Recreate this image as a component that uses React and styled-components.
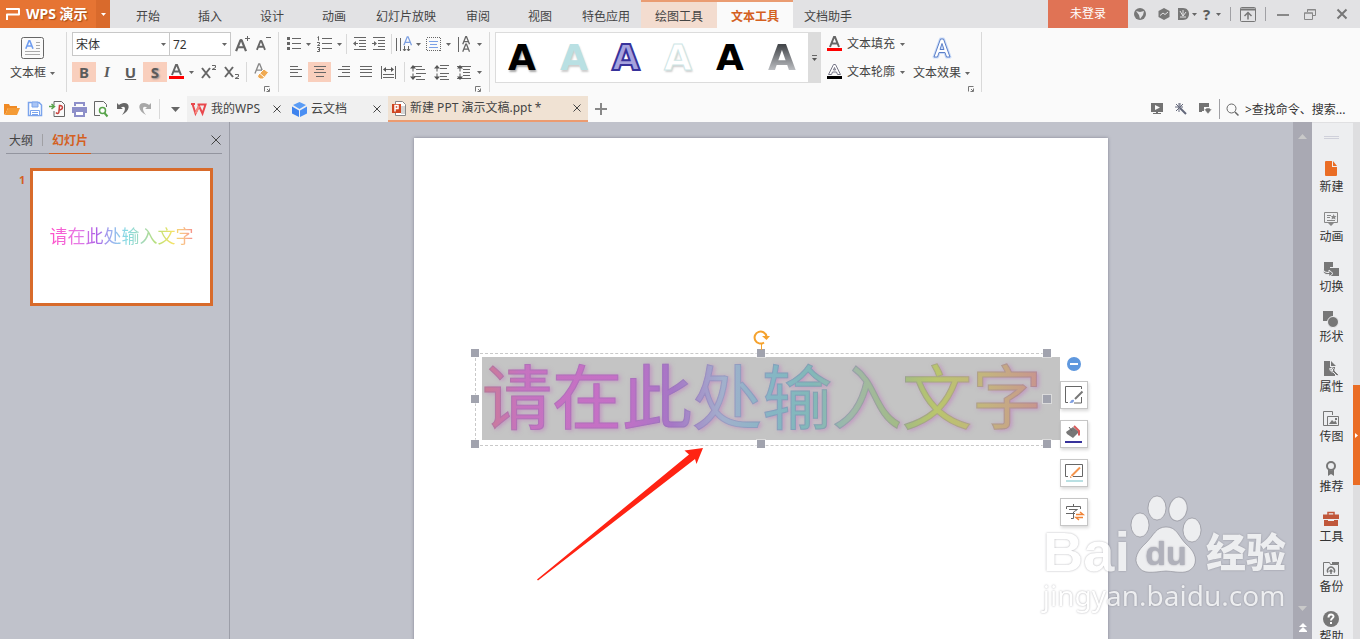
import React from 'react';
import styled, { createGlobalStyle, css } from 'styled-components';

const GlobalStyle = createGlobalStyle`
  * {
    box-sizing: border-box;
  }

  body {
    margin: 0;
    overflow: hidden;
    font-family: 'Noto Sans', 'Noto Sans CJK SC', sans-serif;
    font-size: 12px;
    color: #444;
  }

  button,
  input,
  select {
    font: inherit;
    color: inherit;
    border: none;
    border-radius: 0;
    padding: 0;
    margin: 0;
    background: none;
    outline: none;
  }
`;

const AppContainer = styled.div`
  display: flex;
  flex-direction: column;
  height: 100vh;
  background: #fafafa;
`;

const Drawing = styled.svg`
  display: block;
  flex: none;
  overflow: visible;
`;

/* ---------- title bar ---------- */

const TitleBar = styled.header`
  display: flex;
  flex: none;
  height: 28px;
  background: #e2e2e4;
`;

const Brand = styled.button`
  display: flex;
  align-items: center;
  gap: 6px;
  width: 96px;
  padding-left: 6px;
  background: #e67433;
  color: #fff;
  font-size: 14px;
  font-weight: 700;
  line-height: 28px;
  white-space: nowrap;
  text-shadow: 1px 1px 1px rgba(120, 50, 0, 0.6);
`;

const BrandMenu = styled.button`
  display: flex;
  align-items: center;
  justify-content: center;
  width: 14px;
  margin-right: 7px;
  background: #d96a2c;
`;

const MenuTabs = styled.nav`
  display: flex;
  flex: 1;
`;

const MenuTab = styled.button`
  min-width: 62px;
  padding: 6px 11px 0;
  line-height: 20px;
  white-space: nowrap;

  ${({ $tool }) =>
    $tool &&
    css`
      padding: 4px 14px 0;
      border-top: 2px solid #ea9c72;
      background: #f3dccf;
    `}

  ${({ $active }) =>
    $active &&
    css`
      background: #fafafa;
      color: #d4601f;
      font-weight: 700;
    `}
`;

const LoginButton = styled.button`
  width: 80px;
  background: #e07355;
  color: #fff;
  line-height: 28px;
`;

const WindowTools = styled.div`
  display: flex;
  align-items: center;
  height: 28px;
  padding-right: 4px;
`;

const Tool = styled.button`
  display: flex;
  align-items: center;
  justify-content: center;
  flex: none;
  width: ${({ $w }) => $w || 20}px;
  height: 20px;
  background: ${({ $on }) => ($on ? '#f9cfbd' : 'transparent')};
`;

const Divider = styled.span`
  flex: none;
  width: 1px;
  height: ${({ $h }) => $h || 20}px;
  margin: 0 ${({ $m }) => ($m === undefined ? 2 : $m)}px;
  background: ${({ $dark }) => ($dark ? '#a0a0a4' : '#d9d9d9')};
`;

/* ---------- ribbon ---------- */

const Ribbon = styled.section`
  display: flex;
  flex: none;
  height: 68px;
  padding-top: 4px;
`;

const RibbonGroup = styled.div`
  display: flex;
  flex-direction: column;
  flex: none;
  height: 60px;
  padding-left: 5px;
  width: ${({ $w }) => $w}px;
  border-right: 1px solid #d9d9d9;
`;

const ToolRow = styled.div`
  display: flex;
  align-items: center;
  height: ${({ $tall }) => ($tall ? 24 : 20)}px;
  margin-bottom: ${({ $tall }) => ($tall ? 6 : 0)}px;
`;

const Launcher = styled.button`
  align-self: flex-end;
  margin: 4px 8px 0 0;
`;

const BigButton = styled.button`
  display: flex;
  flex-direction: column;
  align-items: center;
  align-self: flex-start;
  gap: 3px;
  height: 52px;
  padding: 5px 5px 0;
`;

const ButtonLabel = styled.span`
  display: flex;
  align-items: center;
  gap: 4px;
  line-height: 22px;
  white-space: nowrap;
`;

const SelectBox = styled.div`
  display: flex;
  align-items: center;
  width: ${({ $w }) => $w}px;
  height: 24px;
  margin-right: -1px;
  padding-right: 2px;
  border: 1px solid #c8c8c8;
  background: #fff;

  select {
    flex: 1;
    min-width: 0;
    height: 22px;
    padding-left: 3px;
    appearance: none;
    color: #333;
  }

  svg {
    margin-right: 1px;
  }
`;

const Glyph = styled.span`
  font-family: 'Noto Sans', sans-serif;
  font-size: 15px;
  font-weight: 700;
  line-height: 18px;
  color: #5b5b5b;
  font-style: ${({ $italic }) => ($italic ? 'italic' : 'normal')};
  text-decoration: ${({ $under }) => ($under ? 'underline' : 'none')};
  text-shadow: ${({ $shadow }) => ($shadow ? '1px 1px 2px #888' : 'none')};
`;

const SerifGlyph = styled(Glyph)`
  font-family: 'Liberation Serif', serif;
`;

const Gallery = styled.div`
  display: flex;
  flex: none;
  height: 51px;
  margin-left: 5px;
  border: 1px solid #dcdcdc;
  background: #fff;
`;

const artStyles = {
  black: css`
    color: #000;
    text-shadow: 1px 2px 2px rgba(0, 0, 0, 0.35);
  `,
  teal: css`
    color: #b9e0e3;
    text-shadow: 1px 2px 2px rgba(0, 0, 0, 0.2);
  `,
  indigo: css`
    color: #a6a3de;
    -webkit-text-stroke: 2px #37329b;
  `,
  hollow: css`
    color: #fff;
    -webkit-text-stroke: 1px #cfe6e6;
    text-shadow: 1px 2px 2px rgba(0, 0, 0, 0.2);
  `,
  plain: css`
    color: #000;
  `,
  fade: css`
    color: transparent;
    background: linear-gradient(#44474b 25%, #c6c8cc 80%);
    background-clip: text;
  `,
};

const ArtSwatch = styled.button`
  width: 52px;
  height: 49px;
  font-family: 'DejaVu Sans', sans-serif;
  font-size: 36px;
  font-weight: 700;
  line-height: 49px;
  ${({ $art }) => artStyles[$art]}
`;

const GalleryMore = styled.button`
  display: flex;
  align-items: center;
  justify-content: center;
  width: 12px;
  background: #dcdcdc;
`;

const TextToolGroup = styled.div`
  display: flex;
  flex: none;
  gap: 3px;
  width: 161px;
  height: 60px;
  padding-left: 6px;
  border-right: 1px solid #d9d9d9;

  > :last-child {
    margin: 0 0 0 -10px;
  }
`;

const TextToolColumn = styled.div`
  display: flex;
  flex-direction: column;
`;

const LabelledTool = styled.button`
  display: flex;
  align-items: center;
  gap: 5px;
  line-height: 20px;
  white-space: nowrap;
`;

/* ---------- quick bar ---------- */

const QuickBar = styled.section`
  display: flex;
  align-items: center;
  flex: none;
  height: 26px;
`;

const DocTab = styled.div`
  display: flex;
  align-items: center;
  width: ${({ $w }) => $w}px;
  height: 26px;
  padding: 0 6px 0 4px;
  background: ${({ $active }) => ($active ? '#f0e2d3' : '#f0f0f0')};
  border-bottom: ${({ $active }) => ($active ? '2px solid #ec9b70' : 'none')};
`;

const DocName = styled.button`
  display: flex;
  align-items: center;
  flex: 1;
  gap: 4px;
  line-height: 24px;
  white-space: nowrap;
`;

const Grow = styled.span`
  flex: 1;
`;

const SearchBox = styled.label`
  display: flex;
  align-items: center;
  gap: 6px;
  width: 134px;
  margin-left: 4px;

  input {
    width: 110px;
    height: 20px;
  }

  input::placeholder {
    color: #333;
    opacity: 1;
  }
`;

/* ---------- workspace ---------- */

const Workspace = styled.main`
  position: relative;
  display: flex;
  flex: 1;
  min-height: 0;
  overflow: hidden;
  background: #c0c2cb;
`;

const OutlinePanel = styled.aside`
  flex: none;
  width: 230px;
  border-right: 1px solid #9c9ea8;
`;

const PanelTabs = styled.div`
  display: flex;
  align-items: center;
  height: 32px;
  margin: 0 7px 0 6px;
  padding-top: 5px;
  border-bottom: 1px solid #93959f;
`;

const PanelTab = styled.button`
  height: 27px;
  padding: 0 3px;
  line-height: 28px;
  margin-bottom: -1px;
  color: ${({ $active }) => ($active ? '#d4601f' : '#444')};
  font-weight: ${({ $active }) => ($active ? 700 : 400)};
  border-bottom: 1px solid ${({ $active }) => ($active ? '#d4601f' : 'transparent')};
`;

const ThumbRow = styled.div`
  display: flex;
  gap: 5px;
  padding: 14px 0 0 19px;
`;

const ThumbNumber = styled.span`
  width: 6px;
  font-size: 11px;
  font-weight: 700;
  line-height: 24px;
  color: #d4601f;
`;

const Thumb = styled.button`
  width: 183px;
  height: 138px;
  padding-bottom: 4px;
  border: 3px solid #d86b2b;
  background: #fff;
`;

const ThumbText = styled.span`
  font-family: 'Noto Sans CJK SC', sans-serif;
  font-size: 18px;
  font-weight: 400;
  color: transparent;
  background: linear-gradient(
    90deg,
    #ff4fc8 0%,
    #e77be6 20%,
    #b05fe6 32%,
    #9cb4f0 43%,
    #86dbe3 53%,
    #a5d8b4 65%,
    #b8e077 74%,
    #f2e366 85%,
    #f9b98c 94%,
    #f48a8a 100%
  );
  background-clip: text;
`;

const Canvas = styled.section`
  display: flex;
  justify-content: center;
  flex: 1;
  min-width: 0;
  padding: 16px 1px 0 0;
`;

const Slide = styled.div`
  position: relative;
  flex: none;
  width: 694px;
  height: 520px;
  background: #fff;
  box-shadow: 0 0 3px rgba(70, 70, 90, 0.5);
`;

const TextFrame = styled.div`
  position: absolute;
  left: 61px;
  top: 215px;
  width: 574px;
  height: 93px;
  border: 1px dashed #c9c9c9;
`;

const SelectedText = styled.div`
  position: absolute;
  left: 6px;
  top: 3px;
  width: 578px;
  height: 83px;
  background: #c4c4c4;
`;

const WordArt = styled.span`
  display: block;
  width: 560px;
  font-family: 'Noto Sans CJK SC', sans-serif;
  font-size: 70px;
  font-weight: 400;
  line-height: 74px;
  white-space: nowrap;
  color: transparent;
  -webkit-text-stroke: 1px rgba(130, 110, 170, 0.3);
  background: linear-gradient(
    90deg,
    #cb7c92 0%,
    #c673c0 7%,
    #c570c6 24%,
    #a676c6 34%,
    #a2b0cc 43%,
    #85b6c4 52%,
    #82b8b8 59%,
    #a0b8a8 66%,
    #a3bb83 75%,
    #b9c56d 81%,
    #c4b47e 90%,
    #c8968e 99%
  );
  background-clip: text;
  filter: drop-shadow(2px 1px 2px rgba(190, 110, 190, 0.5));
`;

const Handle = styled.span`
  position: absolute;
  left: ${({ $x }) => $x};
  top: ${({ $y }) => $y};
  width: 8px;
  height: 8px;
  margin: -5px;
  background: #a1a3ae;
  box-shadow: 0 0 0 1px rgba(255, 255, 255, 0.4);
`;

const RotateHandle = styled.div`
  position: absolute;
  left: 340px;
  top: 192px;
`;

const ArrowMark = styled.div`
  position: absolute;
  left: 123px;
  top: 309px;
`;

const FloatTools = styled.div`
  position: absolute;
  left: 646px;
  top: 219px;
  display: flex;
  flex-direction: column;
  align-items: center;
  gap: 11px;
  width: 28px;
`;

const FloatButton = styled.button`
  display: flex;
  align-items: center;
  justify-content: center;
  width: 28px;
  height: 28px;
  border: 1px solid #c6c6c6;
  background: #fff;
  box-shadow: 1px 2px 3px rgba(0, 0, 0, 0.15);
`;

const CollapseButton = styled.button`
  height: 14px;
  margin-bottom: -1px;
`;

const ScrollTrack = styled.div`
  display: flex;
  flex-direction: column;
  align-items: center;
  flex: none;
  gap: 12px;
  width: 19px;
  padding: 12px 0 7px;
  background: #a9a9b3;
`;

const SideRail = styled.aside`
  display: flex;
  flex-direction: column;
  align-items: center;
  flex: none;
  width: 41px;
  padding: 13px 2px 0 0;
  background: #edeef0;
  border-top: 1px solid #e0e0e2;
`;

const RailButton = styled.button`
  display: flex;
  flex-direction: column;
  align-items: center;
  flex: none;
  gap: 1px;
  height: 50px;
  line-height: 18px;
  color: #333;
`;

const RailList = styled.div`
  display: flex;
  flex-direction: column;
  margin-top: 22px;
`;

const EdgeStrip = styled.div`
  flex: none;
  width: 7px;
  padding-top: 263px;
  background: #dedee0;
`;

const EdgeHandle = styled.button`
  display: flex;
  align-items: center;
  justify-content: center;
  width: 7px;
  height: 100px;
  background: #ea6d25;
`;

const Watermark = styled.div`
  position: absolute;
  right: 74px;
  bottom: 28px;
  display: flex;
  flex-direction: column;
  gap: 6px;
  color: #fff;
  opacity: 0.72;
  text-shadow: 0 0 2px rgba(90, 90, 100, 0.7);
  pointer-events: none;
`;

const WatermarkLogo = styled.div`
  display: flex;
  align-items: flex-end;
  height: 78px;
  font-weight: 700;
`;

const WatermarkLatin = styled.span`
  font-family: 'Liberation Sans', sans-serif;
  font-size: 56px;
  line-height: 43px;
`;

const WatermarkHan = styled.span`
  margin-left: 4px;
  font-family: 'Noto Sans CJK SC', sans-serif;
  font-size: 40px;
  font-weight: 900;
  line-height: 46px;
`;

const WatermarkUrl = styled.div`
  font-family: 'Noto Sans', sans-serif;
  font-size: 28px;
  line-height: 32px;
`;

/* ---------- drawings ---------- */

const Icon = ({ w = 16, h = 16, children, ...rest }) => (
  <Drawing
    width={w}
    height={h}
    viewBox={`0 0 ${w} ${h}`}
    fill="none"
    stroke="#666"
    aria-hidden="true"
    {...rest}
  >
    {children}
  </Drawing>
);

const Caret = ({ color = '#666', w = 5 }) => (
  <Icon w={w} h={(w + 1) / 2} stroke="none">
    <path d={`M0 0h${w}L${w / 2} ${(w + 1) / 2}z`} fill={color} />
  </Icon>
);

const Cross = ({ s = 9, color = '#444' }) => (
  <Icon w={s} h={s} stroke={color}>
    <path d={`M.5.5L${s - 0.5} ${s - 0.5}M${s - 0.5}.5L.5 ${s - 0.5}`} />
  </Icon>
);

// the capital A that many text tools share
const LetterA = ({ x = 0, y = 0, s = 1, color = '#666', width = 2 }) => (
  <g transform={`translate(${x} ${y}) scale(${s})`} stroke={color} strokeWidth={width}>
    <path d="M1 11L5 1h1l4 10M3 7.500h5" />
  </g>
);

const LauncherIcon = () => (
  <Icon w={6} h={6} stroke="#777">
    <path d="M.5 5.500V.5h5M5.500 2.500v3h-3M3 3l2 2" />
  </Icon>
);

const Lines = ({ rows, w = 16, h = 16, children }) => (
  <Icon w={w} h={h}>
    <path shapeRendering="crispEdges" d={rows.map(([x, y, l]) => `M${x} ${y + 0.5}h${l}`).join('')} />
    {children}
  </Icon>
);

const UpDown = ({ x = 2 }) => (
  <g stroke="none" fill="#555">
    <path d={`M${x} 0l-3 3.500h2.500v3h1v-3H${x + 3}zM${x} 15l-3-3.500h2.500v-3h1v3H${x + 3}z`} />
  </g>
);

const Bullets = () => (
  <Lines w={14} h={14} rows={[[5, 1, 9], [5, 6, 9], [5, 11, 9]]}>
    <path d="M0 0h3v3H0zM0 5h3v3H0zM0 10h3v3H0z" fill="#666" stroke="none" />
  </Lines>
);

const Numbers = () => (
  <Lines w={15} h={16} rows={[[5, 2, 10], [5, 7, 10], [5, 12, 10]]}>
    <path d="M.5 1.500l1-1v4M0 6.500h2.500v1.500L.5 9.500H3M0 11.500h2.500v4H0M1 13.500h1.500" />
  </Lines>
);

const Indent = ({ out }) => (
  <Lines w={14} h={14} rows={[[1, 0, 12], [6, 3, 7], [6, 6, 7], [6, 9, 7], [1, 12, 12]]}>
    <path d={out ? 'M0 6.500l3-2.500v5zM3 6h2v1H3z' : 'M5 6.500L2 4v5zM0 6h2v1H0z'} fill="#666" stroke="none" />
  </Lines>
);

const AlignLeft = () => <Lines w={12} h={12} rows={[[0, 0, 8], [0, 3, 12], [0, 6, 8], [0, 10, 12]]} />;
const AlignCenter = () => <Lines w={12} h={12} rows={[[0, 0, 12], [2, 3, 8], [0, 6, 12], [2, 10, 8]]} />;
const AlignRight = () => <Lines w={12} h={12} rows={[[4, 0, 8], [0, 3, 12], [4, 6, 8], [0, 10, 12]]} />;
const Justify = () => <Lines w={12} h={12} rows={[[0, 0, 12], [0, 3, 12], [0, 6, 12], [0, 10, 12]]} />;

const Distribute = () => (
  <Icon w={15} h={13}>
    <path d="M.5 0v13M14.500 0v13M3 3.500h9M2 8.500h11M2 11.500h11" />
    <path d="M2 3.500L5 1v5zM13 3.500L10 1v5z" fill="#555" stroke="none" />
  </Icon>
);

const SpacingIcon = ({ mode }) => (
  <Lines
    w={16}
    h={15}
    rows={
      mode === 'line'
        ? [[4, 1, 8], [6, 4, 9], [6, 8, 10], [4, 11, 7], [6, 14, 9]]
        : mode === 'para'
          ? [[6, 0, 9], [6, 3, 7], [6, 8, 9], [6, 11, 7], [6, 14, 9]]
          : [[0, 1, 14], [6, 4, 7], [6, 7, 7], [6, 10, 7], [0, 13, 14]]
    }
  >
    <UpDown x={3} />
  </Lines>
);

const TextDirection = () => (
  <Icon w={16} h={15}>
    <path d="M.5 1v13M4.500 1v13M8.500 9v5M12.500 9v5M7 12l1.500 2 1.500-2M11 12l1.500 2 1.500-2" />
    <LetterA x={7} y={-1} s={0.85} color="#7c9fe0" width={1.5} />
  </Icon>
);

const AlignBox = () => (
  <Icon w={15} h={14}>
    <path d="M.5.5h14v13H.5z" strokeDasharray="1 1" shapeRendering="crispEdges" />
    <path d="M3 4.500h9M4 7.500h7M3 10.500h9" stroke="#7ba0e6" />
  </Icon>
);

const StackA = () => (
  <Icon w={13} h={15}>
    <path d="M.5 0v15" />
    <LetterA x={4} y={-1} s={0.75} width={1.7} />
    <LetterA x={4} y={6.500} s={0.75} width={1.7} />
  </Icon>
);

const UnderlineA = ({ color, hollow }) => (
  <Icon w={15} h={16}>
    {hollow ? (
      <path d="M1.500 10.500L6.500.5h2l5 10h-3l-1-2.500h-4l-1 2.500zM6.500 6h2l-1-2.500z" stroke="#778" fill="#fff" />
    ) : (
      <LetterA x={2} />
    )}
    <path d="M0 12h15v3H0z" fill={color} stroke="none" />
  </Icon>
);

const TextBoxIcon = () => (
  <Icon w={23} h={22}>
    <rect x=".5" y=".5" width="22" height="21" rx="2" stroke="#666" />
    <LetterA x={4} y={3} s={0.8} color="#6f9df0" />
    <path d="M15 5.500h4M15 8.500h4M15 11.500h4M4 14.500h15M4 17.500h15" stroke="#aaa" />
  </Icon>
);

const EffectIcon = () => (
  <Icon w={20} h={22} strokeLinejoin="round">
    <path
      d="M2 20L8.500 2h3L18 20h-3.500L13 15.500H7L5.500 20zM8 12.500h4l-2-6z"
      stroke="#cbdcf8"
      strokeWidth="3"
    />
    <path d="M2 20L8.500 2h3L18 20h-3.500L13 15.500H7L5.500 20zM8 12.500h4l-2-6z" stroke="#5b7fc8" fill="#fff" />
  </Icon>
);

const GrowA = ({ minus }) => (
  <Icon w={15} h={16}>
    <g strokeLinejoin="bevel">
      <LetterA x={0} y={minus ? 4 : 3} s={minus ? 0.9 : 1.1} />
    </g>
    <path d={minus ? 'M10 1.500h5' : 'M10 2.500h5M12.500 0v5'} />
  </Icon>
);

const EraserA = () => (
  <Icon w={16} h={16}>
    <LetterA x={1} y={-1} s={0.95} color="#888" width={1.4} />
    <path d="M5 11l6-6 4.500 3.500-5.500 6.500H7L4.500 13z" fill="#f0aa52" stroke="#fff" />
    <path d="M7 9.500l4.500 4" stroke="#fff" />
  </Icon>
);

const FolderIcon = () => (
  <Icon w={16} h={14} stroke="none">
    <path d="M0 12V2h5l1 2h7v2H4L1 13z" fill="#f08a24" />
    <path d="M4 6h12l-3 7H1z" fill="#f49b36" />
  </Icon>
);

const SaveIcon = () => (
  <Icon w={14} h={14} stroke="#7ba4ec">
    <path d="M.5.5h10.500l2.500 2.500v10.500H.5z" strokeWidth="1.500" fill="#fff" />
    <path d="M4 0h6v5H4z" fill="#a9c4f4" />
    <path d="M2.500 8.500h9v5h-9z" fill="#fff" />
    <path d="M4 10.500h6M4 12.500h6" />
  </Icon>
);

const PdfIcon = () => (
  <Icon w={16} h={16}>
    <path d="M5 4V.5h7.500l3 3v12H5V10" />
    <path d="M7 11.500c1.500 2 3 1 3-1.500l.5-5.500c4-.5 4 4.500-.5 4.500" stroke="#c8403c" strokeWidth="1.500" />
    <path d="M0 5.500h5M2.500 3l3 2.500-3 2.500" stroke="#57a34a" strokeWidth="1.500" />
  </Icon>
);

const PrintIcon = () => (
  <Icon w={15} h={15} stroke="#8d8fc9">
    <path d="M3 4V1h9v3" strokeWidth="2" />
    <path d="M0 5h15v6H0z" fill="#8d8fc9" stroke="none" />
    <path d="M3 9h9v5H3z" fill="#fff" strokeWidth="2" />
  </Icon>
);

const PreviewIcon = () => (
  <Icon w={14} h={16}>
    <path d="M12.500 6V3.500l-3-3H.5v14H6" />
    <circle cx="8.500" cy="9.500" r="3" stroke="#57a34a" strokeWidth="1.500" fill="#fff" />
    <path d="M10.500 12l3 3.500" stroke="#57a34a" strokeWidth="2" />
  </Icon>
);

const UndoIcon = ({ redo }) => (
  <Icon w={12} h={14} stroke="none">
    <path
      d="M0 1v6h6L4 5.500C8 3 10 7 5 13c8-4 9-12 2-12C5 1 3 2 2 3z"
      fill={redo ? '#a8a8a8' : '#666'}
      transform={redo ? 'translate(12 0) scale(-1 1)' : undefined}
    />
  </Icon>
);

const WpsIcon = () => (
  <Icon w={16} h={12} stroke="#e9484d">
    <path d="M0 1h4M1.500 1l3 9.500L8 3l3.500 7.500 3-9H6.500" strokeWidth="2" />
    <path d="M4.500 10.500L8 3" stroke="#f58a80" strokeWidth="2" />
  </Icon>
);

const CubeIcon = () => (
  <Icon w={15} h={15} stroke="none">
    <path d="M7.500 0l6.500 3-6.500 4L1 3z" fill="#5a9cf5" />
    <path d="M0 4.500l7 4V15l-7-3.500z" fill="#3e83ee" />
    <path d="M15 4.500l-7 4V15l7-3.500z" fill="#4b8ff3" />
  </Icon>
);

const PptIcon = () => (
  <Icon w={14} h={15}>
    <path d="M3.500.5h7l3 3v11h-10z" fill="#fff" stroke="#888" />
    <path d="M10 5v8M12 5v8" stroke="#aaa" />
    <path d="M0 3h9v9H0z" fill="#cf4520" stroke="none" />
    <path d="M3 10.500v-6h3v3H3" stroke="#fff" strokeWidth="1.500" />
  </Icon>
);

const PresentIcon = () => (
  <Icon w={13} h={12} stroke="none" fill="#737373">
    <path d="M0 0h12v9H7v1h3v1H2v-1h3V9H0zM4 2v5l5-2.500z" fillRule="evenodd" />
  </Icon>
);

const WandIcon = () => (
  <Icon w={12} h={12} stroke="#62677a">
    <path d="M5 5l6 6" strokeWidth="2" />
    <path d="M4 0v9M0 4h8M1 1l6 6M8 1L1 8M5 0v3" />
  </Icon>
);

const FlagIcon = () => (
  <Icon w={13} h={12} stroke="none">
    <path d="M0 0h10v4H5v4H3v1H0z" fill="#737373" />
    <path d="M5 6h2V5h4v1h2l-4 5z" fill="#737373" stroke="#fafafa" strokeWidth=".5" />
  </Icon>
);

const SearchIcon = () => (
  <Icon w={13} h={13}>
    <circle cx="5.500" cy="5.500" r="4.500" />
    <path d="M9 9l3.500 3.500" strokeWidth="1.500" />
  </Icon>
);

const BrandIcon = () => (
  <Icon w={14} h={12} stroke="#fff">
    <path d="M0 1h13v5.500H1V12" strokeWidth="2" strokeLinejoin="round" />
  </Icon>
);

const LionIcon = () => (
  <Icon w={12} h={12} stroke="none">
    <circle cx="6" cy="6" r="6" fill="#777" />
    <path d="M2 3l4 1 4-1-1 4-3 4-1-4z" fill="#e2e2e4" />
  </Icon>
);

const HexIcon = () => (
  <Icon w={12} h={12} stroke="none">
    <path d="M6 0l5.500 3v6L6 12 .5 9V3z" fill="#777" />
    <path d="M2 7.500L5 5l2 1.500L10 4" stroke="#e2e2e4" />
  </Icon>
);

const DocerIcon = () => (
  <Icon w={11} h={12} stroke="none">
    <path d="M0 0h5c8 0 8 12 0 12H0z" fill="#777" />
    <path d="M2 3l3 5V2M5 8l3-4M2 9h6" stroke="#e2e2e4" />
  </Icon>
);

const ShareBoxIcon = () => (
  <Icon w={16} h={15} stroke="#777">
    <rect x=".5" y=".5" width="15" height="14" rx="1" />
    <path d="M1 2.500h14" strokeWidth="2" />
    <path d="M8 12.500V6M4.500 9L8 5.500 11.500 9" strokeWidth="1.500" />
  </Icon>
);

const RestoreIcon = () => (
  <Icon w={12} h={11} stroke="#888">
    <path d="M.5 4h8v6.500h-8zM0 4h9M3.500 3V.5h8v6H9M3 1h9" />
  </Icon>
);

const railIcons = {
  新建: (
    <path d="M3 0h6v6h5v8a1 1 0 0 1-1 1H3a1 1 0 0 1-1-1V1a1 1 0 0 1 1-1zM10 0l4 5h-4z" fill="#ea6d25" stroke="none" />
  ),
  动画: (
    <>
      <path d="M1.500 1.500h13v10h-13zM4 4.500h4M4 6.500h3M4 9.500h8" stroke="#888" />
      <path d="M10.500 3l1 2h2l-1.500 1.500.5 2-2-1-2 1 .5-2L8 5h2zM5 12h6l-3 3z" fill="#888" stroke="none" />
    </>
  ),
  切换: (
    <>
      <path d="M1 1h9v5H7v5H1zM7 7h9v8H7z" fill="#777" stroke="none" />
      <path d="M0 8.500c1 2.500 3 3 6 3V9l4 3.500L6 16v-2.500C3 14 0 13 0 8.500z" fill="#777" stroke="#edeef0" />
    </>
  ),
  形状: (
    <>
      <path d="M0 0h10v10H0z" fill="#777" stroke="none" />
      <circle cx="10" cy="11" r="5.500" fill="#777" stroke="#edeef0" />
    </>
  ),
  属性: (
    <>
      <path d="M1 0h6v6h5v9H1zM8 0l5 5H8z" fill="#777" stroke="none" />
      <path d="M7 7a3 3 0 0 0 3 4l4 4 2-1-4-4a3 3 0 0 0-4-3l2 2-1 1z" fill="#777" stroke="#edeef0" />
    </>
  ),
  传图: (
    <>
      <path d="M5 14.500H.5V.5h9V4" stroke="#777" />
      <path d="M4.500 5.500h11v9h-11z" stroke="#777" />
      <path d="M6 13l3-4 2 2 1.500-1.500L14 13zM12 7h2v2h-2z" fill="#777" stroke="none" />
    </>
  ),
  推荐: (
    <>
      <circle cx="8" cy="5" r="4" stroke="#777" strokeWidth="2" />
      <path d="M5 8v7l3-2 3 2V8L8 10z" fill="#777" stroke="none" />
    </>
  ),
  工具: (
    <>
      <path d="M5 4V1.500h6V4" stroke="#c0573b" strokeWidth="1.500" />
      <path d="M0 3.500h16V8H0z" fill="#c0573b" stroke="none" />
      <path d="M1 9h4v1h6V9h4v6H1z" fill="#c0573b" stroke="none" />
    </>
  ),
  备份: (
    <>
      <path d="M.5 1.500h6l1 2h8v11H.5z" stroke="#777" />
      <path d="M9 1h7v2H9z" fill="#777" stroke="none" />
      <path d="M5 11.500a3.500 3.500 0 1 1 6 0M8 13V9M6.500 10.500L8 9l1.500 1.500" stroke="#777" strokeWidth="1.500" />
    </>
  ),
  帮助: (
    <>
      <circle cx="8" cy="8" r="8" fill="#777" stroke="none" />
      <path d="M5.500 6.500c0-4 5-3.500 5-1 0 2-2.500 1.500-2.500 4M8 11v2" stroke="#fff" strokeWidth="2" />
    </>
  ),
};

const Paw = () => (
  <Icon w={72} h={78} stroke="rgba(90,90,100,.5)" strokeWidth="1">
    <g fill="#fff">
      <ellipse cx="10" cy="30" rx="9" ry="12" />
      <ellipse cx="27" cy="13" rx="9" ry="12" />
      <ellipse cx="48" cy="14" rx="9" ry="12" transform="rotate(10 48 14)" />
      <ellipse cx="62" cy="35" rx="9" ry="12" />
      <path d="M36 32c-10 0-12 8-20 16-8 7-13 16-8 23 5 9 15 6 28 5 13 1 22 4 28-5 4-8-1-16-8-22-8-8-9-17-20-17z" />
    </g>
    <text
      x="36"
      y="70"
      textAnchor="middle"
      fontFamily="Liberation Sans, sans-serif"
      fontSize="34"
      fontWeight="700"
      fill="#aaabb5"
      stroke="none"
    >
      du
    </text>
  </Icon>
);

const menuItems = ['开始', '插入', '设计', '动画', '幻灯片放映', '审阅', '视图', '特色应用'];
const artKinds = ['black', 'teal', 'indigo', 'hollow', 'plain', 'fade'];
const handles = [
  ['0%', '0%'],
  ['50%', '0%'],
  ['100%', '0%'],
  ['0%', '50%'],
  ['100%', '50%'],
  ['0%', '100%'],
  ['50%', '100%'],
  ['100%', '100%'],
];

const Header = () => (
  <TitleBar>
    <Brand>
      <BrandIcon />
      WPS 演示
    </Brand>
    <BrandMenu aria-label="主菜单">
      <Caret color="#fff" />
    </BrandMenu>
    <MenuTabs>
      {menuItems.map((item) => (
        <MenuTab key={item}>{item}</MenuTab>
      ))}
      <MenuTab $tool>绘图工具</MenuTab>
      <MenuTab $tool $active>文本工具</MenuTab>
      <MenuTab>文档助手</MenuTab>
    </MenuTabs>
    <LoginButton>未登录</LoginButton>
    <WindowTools>
      <Tool $w={24} aria-label="皮肤"><LionIcon /></Tool>
      <Tool $w={23} aria-label="云服务"><HexIcon /></Tool>
      <Tool $w={17} aria-label="稻壳"><DocerIcon /></Tool>
      <Caret />
      <Tool $w={19} aria-label="帮助"><Glyph>?</Glyph></Tool>
      <Caret />
      <Divider $dark $h={14} $m={9} />
      <Tool $w={16} aria-label="隐藏功能区"><ShareBoxIcon /></Tool>
      <Divider $dark $h={14} $m={9} />
      <Tool $w={16} aria-label="最小化">
        <Icon w={12} h={4} stroke="#888" strokeWidth="2"><path d="M0 3h12" /></Icon>
      </Tool>
      <Tool $w={37} aria-label="还原"><RestoreIcon /></Tool>
      <Tool $w={28} aria-label="关闭">
        <Icon w={10} h={10} stroke="#777" strokeWidth="2"><path d="M.5.5l9 9M9.500.5l-9 9" /></Icon>
      </Tool>
    </WindowTools>
  </TitleBar>
);

const RibbonBar = () => (
  <Ribbon>
    <RibbonGroup $w={67}>
      <BigButton>
        <TextBoxIcon />
        <ButtonLabel>文本框<Caret /></ButtonLabel>
      </BigButton>
    </RibbonGroup>

    <RibbonGroup $w={212}>
      <ToolRow $tall>
        <SelectBox $w={98}>
          <select aria-label="字体" defaultValue="宋体"><option>宋体</option></select>
          <Caret />
        </SelectBox>
        <SelectBox $w={62}>
          <select aria-label="字号" defaultValue="72"><option>72</option></select>
          <Caret />
        </SelectBox>
        <Tool $w={24} aria-label="增大字号"><GrowA /></Tool>
        <Tool $w={18} aria-label="减小字号"><GrowA minus /></Tool>
      </ToolRow>
      <ToolRow>
        <Tool $w={24} $on><Glyph>B</Glyph></Tool>
        <Tool $w={22}><SerifGlyph $italic>I</SerifGlyph></Tool>
        <Tool $w={25}><Glyph $under>U</Glyph></Tool>
        <Tool $w={24} $on><Glyph $shadow>S</Glyph></Tool>
        <Tool $w={19} aria-label="字体颜色"><UnderlineA color="#f00" /></Tool>
        <Tool $w={11} aria-label="更多颜色"><Caret /></Tool>
        <Tool $w={23} aria-label="上标">
          <Icon w={16} h={14}>
            <path d="M1 3l8 10M9 3L1 13" strokeWidth="2" />
            <path d="M11 .5h3.500v2L11 4.500h4" />
          </Icon>
        </Tool>
        <Tool $w={24} aria-label="下标">
          <Icon w={16} h={14}>
            <path d="M1 2l8 10M9 2L1 12" strokeWidth="2" />
            <path d="M11 9.500h3.500v2L11 13.500h4" />
          </Icon>
        </Tool>
        <Divider />
        <Tool $w={24} aria-label="清除格式"><EraserA /></Tool>
      </ToolRow>
      <Launcher aria-label="字体设置"><LauncherIcon /></Launcher>
    </RibbonGroup>

    <RibbonGroup $w={211}>
      <ToolRow $tall>
        <Tool aria-label="项目符号"><Bullets /></Tool>
        <Tool $w={9} aria-label="更多项目符号"><Caret /></Tool>
        <Tool $w={22} aria-label="编号"><Numbers /></Tool>
        <Tool $w={8} aria-label="更多编号"><Caret /></Tool>
        <Divider $m={3} />
        <Tool $w={19} aria-label="减少缩进"><Indent out /></Tool>
        <Tool aria-label="增加缩进"><Indent /></Tool>
        <Divider />
        <Tool aria-label="文字方向"><TextDirection /></Tool>
        <Tool $w={9} aria-label="更多方向"><Caret /></Tool>
        <Tool aria-label="对齐文本"><AlignBox /></Tool>
        <Tool $w={11} aria-label="更多对齐"><Caret /></Tool>
        <Tool $w={21} aria-label="字符间距"><StackA /></Tool>
        <Tool $w={8} aria-label="更多间距"><Caret /></Tool>
      </ToolRow>
      <ToolRow>
        <Tool $w={24} aria-label="左对齐"><AlignLeft /></Tool>
        <Tool $w={23} $on aria-label="居中"><AlignCenter /></Tool>
        <Tool $w={26} aria-label="右对齐"><AlignRight /></Tool>
        <Tool $w={18} aria-label="两端对齐"><Justify /></Tool>
        <Tool $w={27} aria-label="分散对齐"><Distribute /></Tool>
        <Divider />
        <Tool $w={22} aria-label="行距"><SpacingIcon mode="line" /></Tool>
        <Tool $w={25} aria-label="段距"><SpacingIcon mode="para" /></Tool>
        <Tool $w={21} aria-label="段落间距"><SpacingIcon /></Tool>
        <Tool $w={8} aria-label="更多段落"><Caret /></Tool>
      </ToolRow>
      <Launcher aria-label="段落设置"><LauncherIcon /></Launcher>
    </RibbonGroup>

    <Gallery>
      {artKinds.map((kind) => (
        <ArtSwatch key={kind} $art={kind}>A</ArtSwatch>
      ))}
      <GalleryMore aria-label="更多样式">
        <Icon w={5} h={6}>
          <path d="M0 .5h5" />
          <path d="M0 3h5L2.500 6z" fill="#555" stroke="none" />
        </Icon>
      </GalleryMore>
    </Gallery>

    <TextToolGroup>
      <TextToolColumn>
        <ToolRow $tall>
          <LabelledTool><UnderlineA color="#f00" />文本填充<Caret /></LabelledTool>
        </ToolRow>
        <ToolRow>
          <LabelledTool><UnderlineA color="#000" hollow />文本轮廓<Caret /></LabelledTool>
        </ToolRow>
      </TextToolColumn>
      <BigButton>
        <EffectIcon />
        <ButtonLabel>文本效果<Caret /></ButtonLabel>
      </BigButton>
      <Launcher aria-label="文本效果设置"><LauncherIcon /></Launcher>
    </TextToolGroup>
  </Ribbon>
);

const QuickAccess = () => (
  <QuickBar>
    <Tool $w={24} aria-label="打开"><FolderIcon /></Tool>
    <Tool $w={22} aria-label="保存"><SaveIcon /></Tool>
    <Tool $w={22} aria-label="输出PDF"><PdfIcon /></Tool>
    <Tool $w={22} aria-label="打印"><PrintIcon /></Tool>
    <Tool $w={22} aria-label="打印预览"><PreviewIcon /></Tool>
    <Tool $w={22} aria-label="撤销"><UndoIcon /></Tool>
    <Tool $w={22} aria-label="恢复"><UndoIcon redo /></Tool>
    <Divider $m={3} />
    <Tool $w={24} aria-label="自定义"><Caret w={9} /></Tool>
    <DocTab $w={101}>
      <DocName><WpsIcon />我的WPS</DocName>
      <Tool $w={10} aria-label="关闭"><Cross s={8} /></Tool>
    </DocTab>
    <DocTab $w={100}>
      <DocName><CubeIcon />云文档</DocName>
      <Tool $w={10} aria-label="关闭"><Cross s={8} /></Tool>
    </DocTab>
    <DocTab $w={200} $active>
      <DocName><PptIcon />新建 PPT 演示文稿.ppt *</DocName>
      <Tool $w={10} aria-label="关闭"><Cross s={8} /></Tool>
    </DocTab>
    <Tool $w={26} aria-label="新建标签">
      <Icon w={12} h={12} stroke="#888" strokeWidth="2"><path d="M6 0v12M0 6h12" /></Icon>
    </Tool>
    <Grow />
    <Tool $w={24} aria-label="放映"><PresentIcon /></Tool>
    <Tool $w={24} aria-label="美化"><WandIcon /></Tool>
    <Tool $w={24} aria-label="批注"><FlagIcon /></Tool>
    <Divider $dark />
    <SearchBox>
      <SearchIcon />
      <input aria-label="查找" placeholder=">查找命令、搜索..." />
    </SearchBox>
  </QuickBar>
);

const SlideEditor = () => (
  <Canvas>
    <Slide>
      <TextFrame>
        <SelectedText>
          <WordArt>请在此处输入文字</WordArt>
        </SelectedText>
        {handles.map(([x, y]) => (
          <Handle key={x + y} $x={x} $y={y} />
        ))}
      </TextFrame>
      <RotateHandle>
        <Icon w={16} h={20} stroke="#f5a22d">
          <path d="M10 12.500A6 6 0 1 1 12.500 6.500" strokeWidth="2" />
          <path d="M8 6h8l-3.500 4z" fill="#f5a22d" stroke="none" />
          <path d="M7.500 14v6" />
        </Icon>
      </RotateHandle>
      <ArrowMark>
        <Icon w={168} h={134} stroke="none">
          <path d="M0 132.500L152 7.500 147.500 3.500 166 1 159.500 17 158 12 1 133.500z" fill="#ff2313" />
        </Icon>
      </ArrowMark>
      <FloatTools>
        <CollapseButton aria-label="收起">
          <Icon w={14} h={14} stroke="#fff">
            <circle cx="7" cy="7" r="7" fill="#5f98de" stroke="none" />
            <path d="M3 7h8" strokeWidth="2" />
          </Icon>
        </CollapseButton>
        <FloatButton aria-label="形状样式">
          <Icon w={18} h={18}>
            <path d="M16.500 11v6H9M16.500 3V.5H.5v16H3" />
            <path d="M17.500 5.500L10 13" strokeWidth="2" stroke="#777" />
            <path d="M4 17c2 0 1-4 5-3 0 3-2 3-5 3z" fill="#7e9ee0" stroke="none" />
          </Icon>
        </FloatButton>
        <FloatButton aria-label="填充">
          <Icon w={18} h={18}>
            <path d="M1 7l7-5 6 5-6 6-6-4z" fill="#777" stroke="none" />
            <path d="M4 2l3 4" />
            <path d="M9 1l5 5v4.500" stroke="#d85b5b" strokeWidth="2" />
            <path d="M0 17h17" stroke="#37329b" strokeWidth="2" />
          </Icon>
        </FloatButton>
        <FloatButton aria-label="轮廓">
          <Icon w={18} h={18}>
            <path d="M3 12.500H.5V.5h17v12H8" />
            <path d="M15 3.500L6.500 12" stroke="#f4944d" strokeWidth="2" />
            <path d="M5 14l0-2 2 1.500z" fill="#f4944d" stroke="none" />
            <path d="M1 17h17" stroke="#b9e0e3" strokeWidth="2" />
          </Icon>
        </FloatButton>
        <FloatButton aria-label="文字转换">
          <Icon w={18} h={16}>
            <path d="M8.500 0v2.500M1.500 5V2.500h14V5M4 5.500h8.500L8.500 8v6.500H6M1 9.500h9" />
            <path d="M11 10.500h7l-3-2.500M18 13.500h-7l3 2.500" stroke="#f08336" strokeWidth="1.500" />
          </Icon>
        </FloatButton>
      </FloatTools>
    </Slide>
  </Canvas>
);

const App = () => (
  <AppContainer>
    <GlobalStyle />
    <Header />
    <RibbonBar />
    <QuickAccess />
    <Workspace>
      <OutlinePanel>
        <PanelTabs>
          <PanelTab>大纲</PanelTab>
          <Divider $dark $h={12} $m={6} />
          <PanelTab $active>幻灯片</PanelTab>
          <Grow />
          <Tool $w={12} aria-label="关闭窗格"><Cross s={10} /></Tool>
        </PanelTabs>
        <ThumbRow>
          <ThumbNumber>1</ThumbNumber>
          <Thumb><ThumbText>请在此处输入文字</ThumbText></Thumb>
        </ThumbRow>
      </OutlinePanel>

      <SlideEditor />

      <ScrollTrack>
        <Icon w={9} h={5} stroke="none"><path d="M0 5h9L4.500 0z" fill="#c9c9c9" /></Icon>
        <Grow />
        <Caret w={9} color="#c9c9c9" />
        <Icon w={8} h={9} stroke="none">
          <path d="M0 4h8L4 0zM0 8h8L4 4zM0 8h8v1H0z" fill="#fff" />
        </Icon>
      </ScrollTrack>

      <SideRail>
        <Icon w={15} h={3} stroke="#cfd0da"><path d="M0 .5h15M0 2.500h15" /></Icon>
        <RailList>
          {Object.entries(railIcons).map(([label, icon]) => (
            <RailButton key={label}>
              <Icon>{icon}</Icon>
              {label}
            </RailButton>
          ))}
        </RailList>
      </SideRail>

      <EdgeStrip>
        <EdgeHandle aria-label="展开">
          <Icon w={3} h={5} stroke="none"><path d="M0 0v5l3-2.500z" fill="#fff" /></Icon>
        </EdgeHandle>
      </EdgeStrip>

      <Watermark>
        <WatermarkLogo>
          <WatermarkLatin>Bai</WatermarkLatin>
          <Paw />
          <WatermarkHan>经验</WatermarkHan>
        </WatermarkLogo>
        <WatermarkUrl>jingyan.baidu.com</WatermarkUrl>
      </Watermark>
    </Workspace>
  </AppContainer>
);

export default App;
